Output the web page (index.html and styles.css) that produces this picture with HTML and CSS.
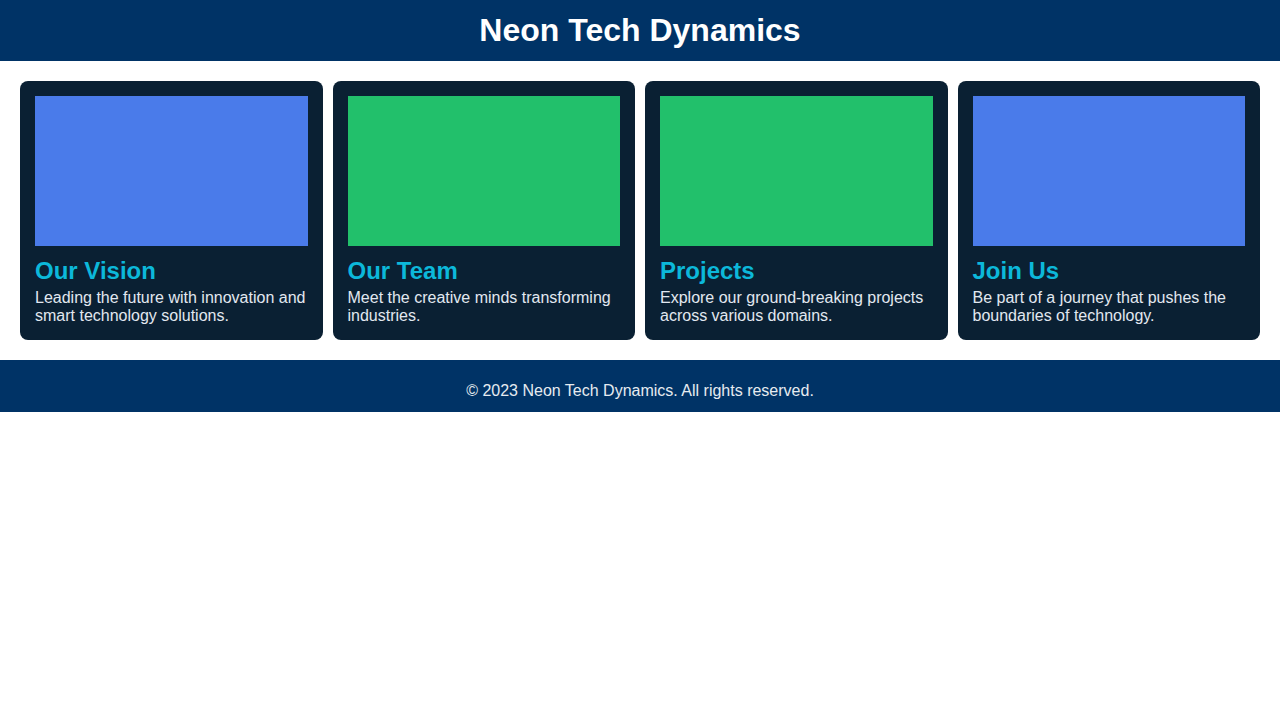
FILE: index.html
```html
<!DOCTYPE html>
<html lang="en">
<head>
<meta charset="utf-8">
<title>Neon Tech Dynamics</title>
<link rel="stylesheet" href="styles.css">
</head>
<body>
<header class="site-header">
  <h1 class="site-title">Neon Tech Dynamics</h1>
</header>
<main class="cards">
  <section class="card">
    <div class="card-image blue"></div>
    <h2 class="card-title">Our Vision</h2>
    <p class="card-text">Leading the future with innovation and smart technology solutions.</p>
  </section>
  <section class="card">
    <div class="card-image green"></div>
    <h2 class="card-title">Our Team</h2>
    <p class="card-text">Meet the creative minds transforming industries.</p>
  </section>
  <section class="card">
    <div class="card-image green"></div>
    <h2 class="card-title">Projects</h2>
    <p class="card-text">Explore our ground-breaking projects across various domains.</p>
  </section>
  <section class="card">
    <div class="card-image blue"></div>
    <h2 class="card-title">Join Us</h2>
    <p class="card-text">Be part of a journey that pushes the boundaries of technology.</p>
  </section>
</main>
<footer class="site-footer">
  <p class="footer-text">© 2023 Neon Tech Dynamics. All rights reserved.</p>
</footer>
</body>
</html>
```
FILE: styles.css
```css
* { box-sizing: border-box; }
body {
  margin: 0;
  font-family: "Liberation Sans", Arial, sans-serif;
  background: #ffffff;
}
.site-header {
  background: #003366;
  height: 61px;
  display: flex;
  align-items: center;
  justify-content: center;
}
.site-title {
  margin: 0;
  color: #ffffff;
  font-size: 32px;
  font-weight: bold;
  line-height: 37px;
}
.cards {
  display: grid;
  grid-template-columns: repeat(4, 1fr);
  gap: 10px;
  padding: 20px;
}
.card {
  background: #0a2033;
  border-radius: 8px;
  padding: 15px;
}
.card-image {
  height: 150px;
}
.card-image.blue { background: #4a7bea; }
.card-image.green { background: #22c06b; }
.card-title {
  margin: 11px 0 4px;
  color: #0cb8da;
  font-size: 24px;
  line-height: 28px;
  font-weight: bold;
}
.card-text {
  margin: 0;
  color: #e2e8f0;
  font-size: 16px;
  line-height: 18px;
}
.site-footer {
  background: #003366;
  height: 52px;
  padding-top: 22px;
  text-align: center;
}
.footer-text {
  margin: 0;
  color: #e6ebf0;
  font-size: 16px;
  line-height: 18px;
}
```
